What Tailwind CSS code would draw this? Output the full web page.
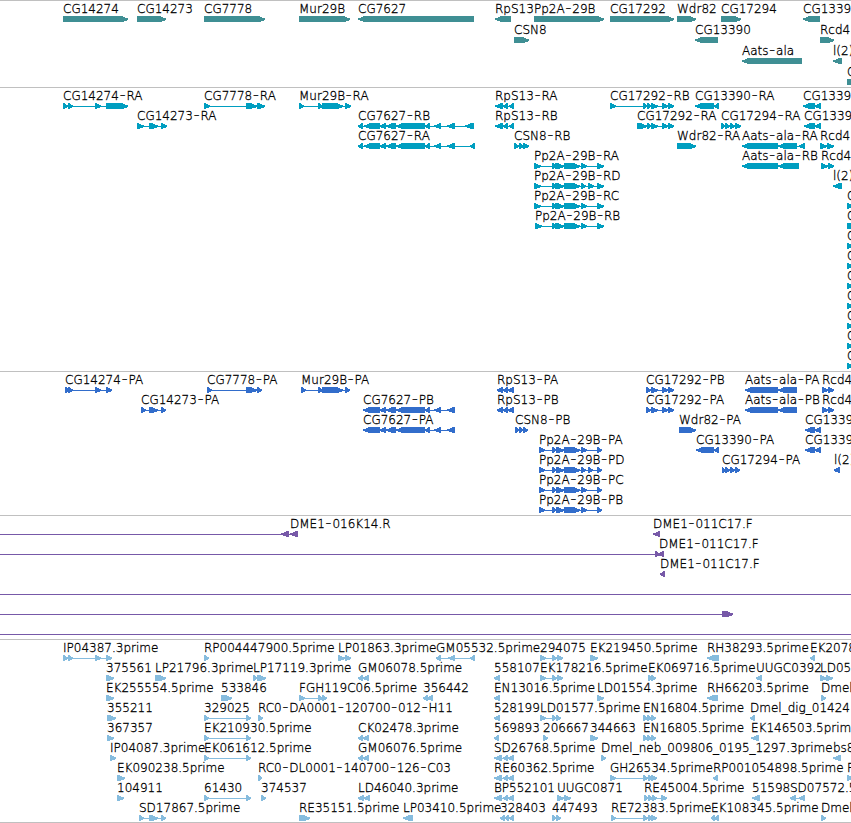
<!DOCTYPE html>
<html lang="en">
  <head>
    <meta charset="UTF-8" />
    <meta name="viewport" content="width=device-width, initial-scale=1.0" />
    <title>Genome Browser</title>
    <script src="https://cdn.jsdelivr.net/npm/@tailwindcss/browser@4"></script>
  </head>
  <body class="bg-white overflow-hidden">
    <main class="flex flex-col w-[851px] font-['DejaVu_Sans_Light','DejaVu_Sans',sans-serif] text-[12px] text-black border-b border-[#c0c0c0]">
      <section class="h-[87px] border-t border-[#c0c0c0]">
        <svg id="genes" class="block w-full h-full text-[#3f8f94]"></svg>
      </section>
      <section class="h-[284px] border-t border-[#c0c0c0]">
        <svg id="transcripts" class="block w-full h-full text-[#009ec0]"></svg>
      </section>
      <section class="h-[144px] border-t border-[#c0c0c0]">
        <svg id="proteins" class="block w-full h-full text-[#326dcb]"></svg>
      </section>
      <section class="h-[124px] border-t border-[#c0c0c0]">
        <svg id="bacs" class="block w-full h-full text-[#7759a8]"></svg>
      </section>
      <section class="h-[183px] border-t border-[#c0c0c0]">
        <svg id="ests" class="block w-full h-full text-[#86bcde]"></svg>
      </section>
    </main>
    <script>
// one feature per line: row | strand | label | exons
const genes = `
0|+|CG14274|63-128
0|+|CG14273|137-166
0|+|CG7778|204-265
0|+|Mur29B|299-350
0|-|CG7627|358-474
0|-|RpS13|495-511
1|+|CSN8|514-529
0|+|Pp2A-29B|534-604
0|+|CG17292|610-674
0|+|Wdr82|677-696
1|-|CG13390|695-718
0|+|CG17294|721-741
2|-|Aats-ala|742-802
0|-|CG1339|803-820
1|+|Rcd4|820-834
2|-|l(2)|833-842
3|+|C|847-870`;

const transcripts = `
0|+|CG14274-RA|63-68 68-73 95-101 106-128
1|+|CG14273-RA|137-144 149-158 161-167
0|+|CG7778-RA|204-210 246-257 257-265
0|+|Mur29B-RA|299-304 318-323 322-343 345-351
1|-|CG7627-RB|358-363 364-380 380-386 386-396 396-425 425-430 434-441 447-455 465-474
2|-|CG7627-RA|358-363 364-380 380-386 386-396 396-425 425-430 434-441 447-455 470-475
0|-|RpS13-RA|495-503 503-508 509-514
1|-|RpS13-RB|495-503 503-508 509-514
2|+|CSN8-RB|514-519 519-524 523-529
3|+|Pp2A-29B-RA|534-541 552-556 555-564 564-580 581-587 597-604
4|+|Pp2A-29B-RD|534-541 552-556 555-564 564-580 581-586 588-594 597-604
5|+|Pp2A-29B-RC|534-541 552-556 555-564 564-580 581-587 597-604
6|+|Pp2A-29B-RB|535-542 552-556 555-564 564-580 581-587 597-604
0|+|CG17292-RB|610-616 643-647 647-651 651-658 662-668 668-674
1|+|CG17292-RA|637-647 647-651 651-658 662-668 668-674
2|+|Wdr82-RA|677-696
0|-|CG13390-RA|695-714 714-719
1|+|CG17294-RA|721-725 725-730 730-735 735-741
2|-|Aats-ala-RA|742-778 778-797 799-805
3|-|Aats-ala-RB|742-778 778-799
0|-|CG1339|803-815 815-821
1|-|CG1339|804-815 815-821
2|+|Rcd4|820-827 827-834
3|+|Rcd4|821-828 828-834
4|-|l(2)|833-842
5|+|C|847-853
6|+|C|847-870
7|+|C|847-853
8|+|C|847-853
9|+|C|847-853
10|+|C|847-853
11|+|C|847-853
12|+|C|847-853
13|+|C|847-853`;

const proteins = `
0|+|CG14274-PA|65-69 68-73 95-101 106-112
1|+|CG14273-PA|141-146 149-158 161-166
0|+|CG7778-PA|207-212 246-257 257-262
0|+|Mur29B-PA|301-306 318-323 322-343 345-350
1|-|CG7627-PB|363-380 380-386 386-396 396-425 425-430 434-441 447-455
2|-|CG7627-PA|363-380 380-386 386-396 396-425 425-430 434-441 447-455
0|-|RpS13-PA|497-503 503-508 508-514
1|-|RpS13-PB|497-503 503-508 508-514
2|+|CSN8-PB|515-519 519-523 523-528
3|+|Pp2A-29B-PA|539-545 552-556 556-564 564-580 581-587 597-602
4|+|Pp2A-29B-PD|539-545 552-556 556-564 564-580 581-586 588-593 597-602
5|+|Pp2A-29B-PC|539-545 552-556 556-564 564-580 581-587 597-602
6|+|Pp2A-29B-PB|539-545 552-556 556-564 564-580 581-587 597-602
0|+|CG17292-PB|646-651 651-658 662-668 668-674
1|+|CG17292-PA|646-651 651-658 662-668 668-674
2|+|Wdr82-PA|679-696
3|-|CG13390-PA|696-714 714-719
4|+|CG17294-PA|722-725 725-730 730-735 735-740
0|-|Aats-ala-PA|745-778 778-797
1|-|Aats-ala-PB|745-778 778-797
0|+|Rcd4|822-828 828-834
1|+|Rcd4|822-828 828-834
2|-|CG1339|805-815 815-821
3|-|CG1339|805-815 815-821
4|-|l(2)|834-840`;

// optional fields: label x, line start-end
const bacs = `
0|-|DME1-016K14.R|281-289 290-298|290|0-298
0|-|DME1-011C17.F|653-660
1|+||655-660||0-660
1|-|DME1-011C17.F|658-664|659
2|-|DME1-011C17.F|660-665
3|+||||0-851
4|+||722-733||0-733
5|+||||0-851`;

const ests = `
0|+|IP04387.3prime|63-68 68-73 95-101 106-112
0|+|RP004447900.5prime|204-209
0|+|LP01863.3prime|338-345 345-351
0|-|GM05532.5prime|436-441 448-455 470-475
0|+|294075|540-546 552-557 557-563
0|+|EK219450.5prime|590-598
0|-|RH38293.5prime|707-719
0|-|EK2078|810-815
1|+|375561|106-114
1|+|LP21796.3prime|155-166
1|+|LP17119.3prime|253-257 257-266
1|-|GM06078.5prime|358-363 363-369
1|-|558107|494-500
1|+|EK178216.5prime|540-546 552-557 557-563
1|+|EK069716.5prime|648-652 651-656
1|-|UUGC0392|756-762
1|+|LD05|820-827 826-833
2|+|EK255554.5prime|106-114
2|+|533846|221-232
2|+|FGH119C06.5prime|299-305 318-323 322-327
2|-|356442|423-428 427-433
2|-|EN13016.5prime|494-500
2|+|LD01554.3prime|597-604
2|-|RH66203.5prime|707-718
2|+|Dmel|821-826
3|+|355211|107-116
3|+|329025|204-209 246-251
3|+|RC0-DA0001-120700-012-H11|258-263
3|-|528199|494-500
3|+|LD01577.5prime|540-546 552-556 556-561
3|+|EN16804.5prime|643-648 647-652 651-656
3|-|Dmel_dig_01424|750-755
4|+|367357|107-114
4|+|EK210930.5prime|204-209 246-251
4|-|CK02478.3prime|358-363 363-369
4|-|569893|494-499
4|+|206667|543-548
4|+|344663|590-598
4|+|EN16805.5prime|643-648 647-652 651-656
4|-|EK146503.5prime|751-759
5|+|IP04087.3prime|110-116
5|+|EK061612.5prime|204-209 246-251
5|-|GM06076.5prime|358-363 363-369
5|-|SD26768.5prime|494-502 503-508 508-514
5|+|Dmel_neb_009806_0195_1297.3prime|601-606
5|-|bs8|833-841
6|+|EK090238.5prime|117-125
6|+|RC0-DL0001-140700-126-C03|258-262
6|-|RE60362.5prime|494-502 503-508 508-514
6|+|GH26534.5prime|610-616 643-648 648-652 651-657
6|-|RP001054898.5prime|713-718
6|+|F|847-853
7|+|104911|117-124
7|+|61430|204-209 246-251
7|+|374537|261-266
7|-|LD46040.3prime|358-364 364-370
7|-|BP552101|494-502 503-508 508-514
7|+|UUGC0871|557-564 564-571
7|+|RE45004.5prime|644-648 648-653 652-657 661-667
7|-|51598|752-760
7|-|SD07572.5|790-796 799-805
8|+|SD17867.5prime|139-144 149-158 161-166
8|+|RE35151.5prime|299-310
8|-|LP03410.5prime|403-413
8|-|328403|500-505 505-509 509-514
8|+|447493|552-556 556-561
8|+|RE72383.5prime|611-616 643-648 648-652 651-657
8|-|EK108345.5prime|711-715 714-719
8|+|Dmel|821-826`;

// exon body with an arrow head on its strand side
function exon(a, b, strand, y) {
  const head = Math.min(6, b - a - 1);
  if (strand === "+") {
    return `<polygon points="${a},${y} ${b - head},${y} ${b},${y + 2.6} ${b},${y + 4} ${b - head},${y + 6} ${a},${y + 6}" />`;
  }
  return `<polygon points="${b},${y} ${a + head},${y} ${a},${y + 2.6} ${a},${y + 4} ${a + head},${y + 6} ${b},${y + 6}" />`;
}

function draw(id, data, pitch) {
  let shapes = "";
  let labels = "";
  data.trim().split("\n").forEach((row) => {
    const [level, strand, label, exons, labelX, span] = row.split("|");
    const top = level * pitch;
    const parts = exons ? exons.split(" ").map((e) => e.split("-").map(Number)) : [];
    const [from, to] = span ? span.split("-").map(Number) : [parts[0][0], parts[parts.length - 1][1]];
    shapes += `<rect x="${from}" y="${top + 18}" width="${to - from}" height="1" />`;
    parts.forEach(([a, b]) => {
      shapes += exon(a, b, strand, top + 15);
    });
    if (label) {
      const text = label.replace(/-/g, '<tspan dx="0.8" class="text-[16px] tracking-[1px]">-</tspan>');
      labels += `<text x="${labelX || from}" y="${top + 12}">${text}</text>`;
    }
  });
  document.getElementById(id).innerHTML =
    `<g class="fill-current" shape-rendering="crispEdges">${shapes}</g><g class="fill-black stroke-black stroke-[0.3px]">${labels}</g>`;
}

draw("genes", genes, 21);
draw("transcripts", transcripts, 20);
draw("proteins", proteins, 20);
draw("bacs", bacs, 20);
draw("ests", ests, 20);
    </script>
  </body>
</html>
